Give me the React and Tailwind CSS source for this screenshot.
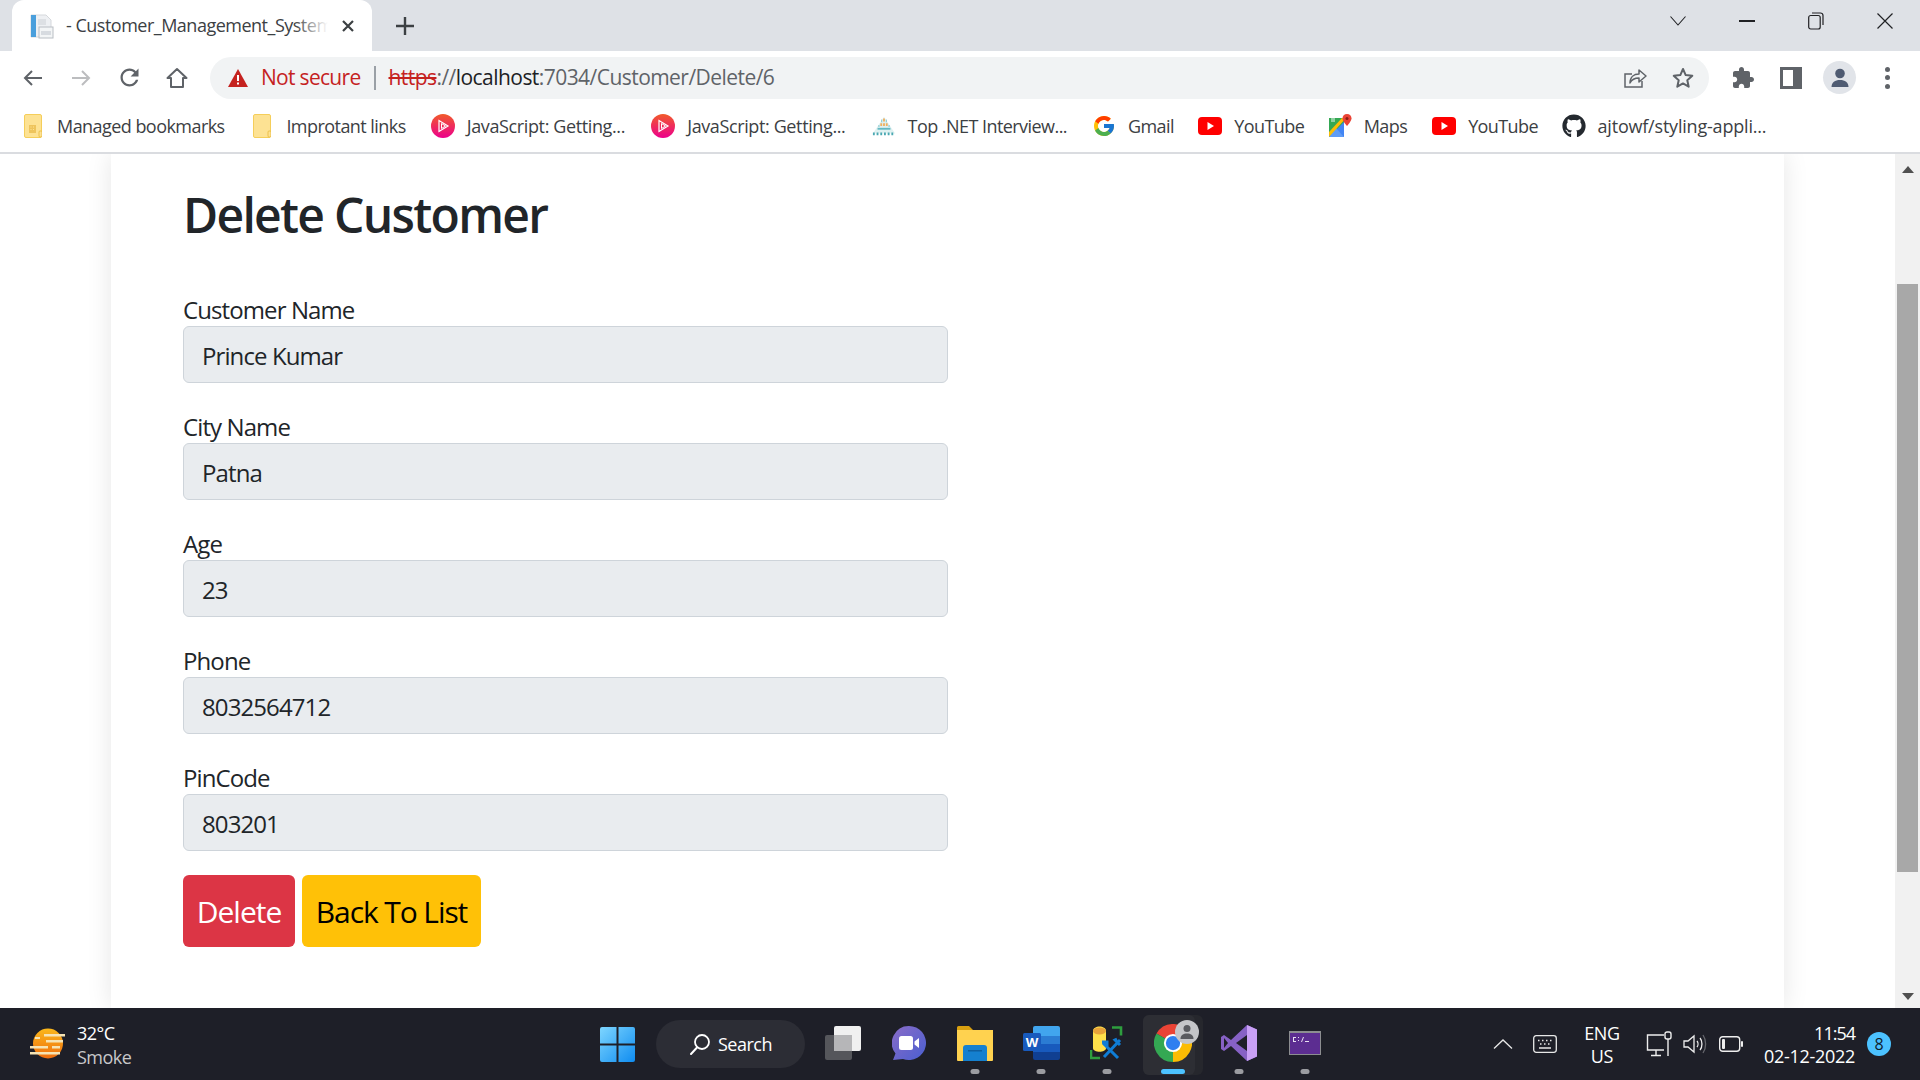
import { FaGithub } from "react-icons/fa";
import { FcGoogle } from "react-icons/fc";

const fields = [
  { label: "Customer Name", value: "Prince Kumar" },
  { label: "City Name", value: "Patna" },
  { label: "Age", value: "23" },
  { label: "Phone", value: "8032564712" },
  { label: "PinCode", value: "803201" },
];

const FolderIcon = ({ managed }) => (
  <svg width="18" height="24" viewBox="0 0 18 24">
    <rect x="0.5" y="0.5" width="17" height="23" rx="1.5" fill="#fde293" stroke="#f5ce5a" />
    <rect x="15" y="17" width="3" height="6" rx="1" fill="#fde293" stroke="#e8b93a" strokeWidth="0.8" />
    {managed ? <path d="M5 11h7v8H5z" fill="#eec45c" /> : null}
    {managed ? <path d="M6.5 12.5h1v1h-1zM9 12.5h1v1H9zM6.5 15h1v1h-1zM9 15h1v1H9z" fill="#fde293" /> : null}
  </svg>
);

const PluralsightIcon = ({ id }) => (
  <svg width="24" height="24" viewBox="0 0 24 24">
    <defs>
      <linearGradient id={id} x1="0" y1="0" x2="0" y2="1">
        <stop offset="0" stopColor="#f15b2a" />
        <stop offset="1" stopColor="#ec008c" />
      </linearGradient>
    </defs>
    <ellipse cx="12" cy="12" rx="12" ry="12" fill={`url(#${id})`} />
    <path d="M8 6.5v11l9-5.5z" fill="none" stroke="#fff" strokeWidth="1.2" />
    <path d="M10.5 9.5v5l4-2.500z" fill="none" stroke="#fff" strokeWidth="1" />
  </svg>
);

const NetIcon = () => (
  <svg width="26" height="24" viewBox="0 0 26 24">
    <path d="M13 2L1 20h24z" fill="#dff1f1" />
    <path d="M12 4h2v3h-2zM9 9h2v3H9zM12 9h2v3h-2zM15 9h2v3h-2z" fill="#f0b060" />
    <path d="M6 14h14v2H6z" fill="#62b8c2" />
    <path d="M1 19h2v3H1zM5 19h2v3H5zM9 19h2v3H9zM13 19h2v3h-2zM17 19h2v3h-2zM21 19h2v3h-2z" fill="#4aa8b2" />
    <path d="M10 5h1v3h-1zM15 5h1v3h-1zM7 11h1v2H7zM18 11h1v2h-1z" fill="#7fc4cc" />
  </svg>
);

const YoutubeIcon = () => (
  <svg width="24" height="18" viewBox="0 0 24 18">
    <rect width="24" height="18" rx="4" fill="#ff0000" />
    <path d="M9.500 5v8l6.500-4z" fill="#fff" />
  </svg>
);

const MapsIcon = () => (
  <svg width="24" height="24" viewBox="0 0 24 24">
    <path d="M1 4h15v19H1z" fill="#34a853" />
    <path d="M1 23L16 8v15z" fill="#4285f4" />
    <path d="M1 23l7-9 8 9z" fill="#5f9cf5" />
    <path d="M1 18L14 4h4L1 23z" fill="#fbbc04" />
    <path d="M3 4h4v4H3z" fill="#8fd0a0" />
    <path d="M19 0c-2.800 0-4.500 2-4.500 4.300C14.500 7.500 19 12 19 12s4.500-4.500 4.500-7.700C23.500 2 21.800 0 19 0z" fill="#ea4335" />
    <circle cx="19" cy="4.500" r="1.500" fill="#8c1c13" />
  </svg>
);

const bookmarks = [
  { icon: <FolderIcon managed />, text: "Managed bookmarks", size: "w-[168px] tracking-[-0.55px]" },
  { icon: <FolderIcon />, text: "Improtant links", size: "w-[119px] tracking-[-0.55px]" },
  { icon: <PluralsightIcon id="ps1" />, text: "JavaScript: Getting...", size: "w-[159px] tracking-[-0.38px]" },
  { icon: <PluralsightIcon id="ps2" />, text: "JavaScript: Getting...", size: "w-[159px] tracking-[-0.38px]" },
  { icon: <NetIcon />, text: "Top .NET Interview...", size: "w-[159px] tracking-[-0.55px]" },
  { icon: <FcGoogle size={24} />, text: "Gmail", size: "w-[45px] tracking-[-0.55px]" },
  { icon: <YoutubeIcon />, text: "YouTube", size: "w-[68px] tracking-[-0.6px]" },
  { icon: <MapsIcon />, text: "Maps", size: "w-[43px] tracking-[-0.55px]" },
  { icon: <YoutubeIcon />, text: "YouTube", size: "w-[68px] tracking-[-0.6px]" },
  { icon: <FaGithub size={24} color="#24292f" />, text: "ajtowf/styling-appli...", size: "w-[167px] tracking-[-0.2px]" },
];

function TabStrip() {
  return (
    <div className="flex h-[51px] items-stretch bg-[#dee1e6] pl-[12px]">
      <div className="relative flex h-[51px] w-[360px] items-center rounded-t-[12px] bg-white pl-[18px]">
        <svg width="24" height="26" viewBox="0 0 24 26">
          <path d="M1 2h15l5 5v17H1z" fill="#eef0f3" stroke="#d5d8dc" />
          <rect x="1" y="2" width="5" height="22" fill="#4a9fdc" />
          <rect x="9" y="14" width="14" height="11" fill="#f3f5f6" stroke="#b9bec4" />
          <rect x="11" y="18" width="10" height="4" fill="#d7dbe0" />
          <rect x="8" y="6" width="8" height="6" fill="#dde0e4" />
        </svg>
        <div className="relative ml-[12px] w-[262px] overflow-hidden whitespace-nowrap text-[18px] tracking-[-0.5px] text-[#3c4043]">
          - Customer_Management_System
          <div className="absolute inset-y-0 right-0 w-[34px] bg-gradient-to-r from-white/0 to-white" />
        </div>
        <svg className="ml-[13px]" width="14" height="14" viewBox="0 0 14 14">
          <path d="M2 2l10 10M12 2L2 12" stroke="#3c4043" strokeWidth="2.200" />
        </svg>
      </div>
      <div className="flex w-[66px] items-center justify-center">
        <svg width="20" height="20" viewBox="0 0 20 20">
          <path d="M10 1v18M1 10h18" stroke="#3c4043" strokeWidth="2.400" />
        </svg>
      </div>
      <div className="ml-auto flex items-center pb-[9px]">
        <div className="flex w-[68px] justify-center">
          <svg width="18" height="12" viewBox="0 0 18 12">
            <path d="M1.500 1.500L9 10l7.500-8.500" fill="none" stroke="#202124" strokeWidth="1.100" />
          </svg>
        </div>
        <div className="flex w-[70px] justify-center">
          <div className="h-[1.500px] w-[16px] bg-[#202124]" />
        </div>
        <div className="flex w-[68px] justify-center">
          <svg width="16" height="18" viewBox="0 0 16 18">
            <rect x="0.700" y="3.500" width="11.500" height="13.500" rx="2" fill="none" stroke="#202124" strokeWidth="1.200" />
            <path d="M4 1h8.500A2.500 2.500 0 0 1 15 3.500V13" fill="none" stroke="#202124" strokeWidth="1.200" />
          </svg>
        </div>
        <div className="flex w-[70px] justify-center">
          <svg width="18" height="18" viewBox="0 0 18 18">
            <path d="M1.500 1.500l15 15M16.500 1.500l-15 15" stroke="#202124" strokeWidth="1.200" />
          </svg>
        </div>
      </div>
    </div>
  );
}

function Toolbar() {
  return (
    <div className="flex h-[53px] items-center bg-white pl-[9px]">
      <div className="flex w-[48px] justify-center">
        <svg width="24" height="24" viewBox="0 0 24 24">
          <path d="M21 12H4M11 5l-7 7 7 7" fill="none" stroke="#5f6368" strokeWidth="2" />
        </svg>
      </div>
      <div className="flex w-[48px] justify-center">
        <svg width="24" height="24" viewBox="0 0 24 24">
          <path d="M3 12h17M13 5l7 7-7 7" fill="none" stroke="#bcbdbf" strokeWidth="2" />
        </svg>
      </div>
      <div className="flex w-[48px] justify-center">
        <svg width="27" height="27" viewBox="0 0 24 24">
          <path fill="#5f6368" d="M17.650 6.350C16.200 4.900 14.210 4 12 4c-4.420 0-7.990 3.580-7.990 8s3.570 8 7.990 8c3.730 0 6.840-2.550 7.730-6h-2.080c-.82 2.330-3.040 4-5.650 4-3.310 0-6-2.690-6-6s2.690-6 6-6c1.660 0 3.140.69 4.220 1.780L13 11h7V4l-2.350 2.350z" />
        </svg>
      </div>
      <div className="flex w-[48px] justify-center">
        <svg width="24" height="24" viewBox="0 0 24 24">
          <path d="M12 3L2.500 12H6v9h12v-9h3.500z" fill="none" stroke="#5f6368" strokeWidth="2" strokeLinejoin="round" />
        </svg>
      </div>
      <div className="ml-[9px] flex h-[42px] w-[1499px] items-center rounded-full bg-[#f1f3f4] pl-[17px]">
        <svg width="22" height="20" viewBox="0 0 22 20">
          <path d="M11 1L21 19H1z" fill="#c5221f" />
          <path d="M10 7h2v6h-2zM10 14.500h2v2h-2z" fill="#fff" />
        </svg>
        <span className="ml-[12px] whitespace-nowrap text-[21px] leading-none tracking-[-0.7px] text-[#c5221f]">Not secure</span>
        <div className="ml-[13px] h-[24px] w-[2px] bg-[#9aa0a6]" />
        <div className="ml-[13px] whitespace-nowrap text-[21px] leading-none tracking-[-0.55px] text-[#5f6368]">
          <span className="text-[#c5221f] line-through">https</span>://<span className="text-[#202124]">localhost</span>:7034/Customer/Delete/6
        </div>
        <div className="ml-auto flex items-center pr-[14px]">
          <svg width="24" height="24" viewBox="0 0 24 24">
            <path d="M19 15v6H2V8h7" fill="none" stroke="#5f6368" strokeWidth="1.500" />
            <path d="M7 17c0-6 4-9 9-9V4l7 6-7 6v-4c-4 0-7 1-9 5z" fill="none" stroke="#5f6368" strokeWidth="1.500" strokeLinejoin="round" />
          </svg>
          <svg className="ml-[24px]" width="24" height="24" viewBox="0 0 24 24">
            <path d="M12 3l2.700 6.100 6.600.7-5 4.400 1.400 6.500-5.700-3.300-5.700 3.300 1.400-6.500-5-4.400 6.600-.7z" fill="none" stroke="#5f6368" strokeWidth="2" strokeLinejoin="round" />
          </svg>
        </div>
      </div>
      <div className="flex w-[68px] justify-center">
        <svg width="24" height="26" viewBox="0 0 24 24">
          <path fill="#5f6368" d="M20.500 11H19V7c0-1.100-.9-2-2-2h-4V3.500C13 2.120 11.880 1 10.500 1S8 2.120 8 3.500V5H4c-1.100 0-1.990.9-1.990 2v3.800H3.500c1.490 0 2.700 1.210 2.700 2.700s-1.210 2.700-2.700 2.700H2V20c0 1.100.9 2 2 2h3.800v-1.500c0-1.490 1.210-2.700 2.700-2.700 1.490 0 2.700 1.210 2.700 2.700V22H17c1.100 0 2-.9 2-2v-4h1.500c1.380 0 2.500-1.120 2.500-2.500S21.880 11 20.500 11z" />
        </svg>
      </div>
      <div className="flex w-[28px] justify-center">
        <svg width="22" height="22" viewBox="0 0 22 22">
          <rect width="22" height="22" fill="#5f6368" />
          <rect x="3" y="3" width="10" height="16" fill="#fff" />
        </svg>
      </div>
      <div className="ml-[18px] flex h-[33px] w-[33px] items-center justify-center rounded-full bg-[#e1e4e9]">
        <svg width="22" height="22" viewBox="0 0 22 22">
          <circle cx="11" cy="6.500" r="4.800" fill="#4f5b72" />
          <path d="M2.500 20c0-4.500 3.500-7 8.500-7s8.500 2.500 8.500 7z" fill="#4f5b72" />
        </svg>
      </div>
      <div className="ml-[15px] flex w-[32px] flex-col items-center gap-[3.500px]">
        <div className="h-[5px] w-[5px] rounded-full bg-[#5f6368]" />
        <div className="h-[5px] w-[5px] rounded-full bg-[#5f6368]" />
        <div className="h-[5px] w-[5px] rounded-full bg-[#5f6368]" />
      </div>
    </div>
  );
}

function BookmarksBar() {
  return (
    <div className="flex h-[50px] items-center gap-[25.4px] border-b-2 border-[#dadce0] bg-white pb-[4px] pl-[21px]">
      {bookmarks.map((item, i) => (
        <div key={i} className="flex items-center gap-[12px]">
          <div className="flex h-[24px] w-[24px] items-center justify-center">{item.icon}</div>
          <span className={`${item.size} whitespace-nowrap text-[18px] leading-none text-[#3c4043]`}>{item.text}</span>
        </div>
      ))}
    </div>
  );
}

function DeleteCard() {
  return (
    <div className="ml-[111px] h-full w-[1673px] bg-white pl-[72px] pt-[32px] text-[#212529] shadow-[0_0_24px_rgba(0,0,0,0.1)]">
      <h2 className="text-[48px] font-semibold leading-[1.2] tracking-[-1.7px]">Delete Customer</h2>
      <div className="mt-[46px] w-[765px]">
        {fields.map((field) => (
          <div key={field.label} className="mb-[24px]">
            <div className="h-[36px] text-[24px] leading-[40px] tracking-[-0.9px]">{field.label}</div>
            <div className="flex h-[57px] items-center rounded-[6px] border border-[#ced4da] bg-[#e9ecef] pl-[18px] pt-[3px] text-[24px] tracking-[-0.9px]">
              {field.value}
            </div>
          </div>
        ))}
      </div>
      <div className="flex gap-[7px]">
        <button type="button" className="h-[72px] w-[112px] rounded-[6px] bg-[#dc3545] pt-[1px] text-[30px] tracking-[-1px] text-white">
          Delete
        </button>
        <button type="button" className="h-[72px] w-[179px] rounded-[6px] bg-[#ffc107] pt-[1px] text-[30px] tracking-[-1.1px] text-black">
          Back To List
        </button>
      </div>
    </div>
  );
}

function Scrollbar() {
  return (
    <div className="flex h-full w-[25px] flex-col items-center bg-[#f1f1f1]">
      <div className="mt-[12px] h-0 w-0 shrink-0 border-x-[6px] border-b-[7px] border-x-transparent border-b-[#505050]" />
      <div className="mt-[111px] h-[588px] w-[21px] shrink-0 bg-[#a8a8a8]" />
      <div className="mt-[121px] h-0 w-0 shrink-0 border-x-[6px] border-t-[7px] border-x-transparent border-t-[#505050]" />
    </div>
  );
}

function TaskItem({ dot, children }) {
  return (
    <div className="relative flex h-full w-[66px] items-center justify-center pb-[2px]">
      {children}
      {dot ? <div className="absolute bottom-[6px] left-1/2 h-[5px] w-[9px] -translate-x-1/2 rounded-full bg-[#9b9ca1]" /> : null}
    </div>
  );
}

function Taskbar() {
  return (
    <div className="flex h-[72px] items-center bg-[#1e1f28] text-white">
      <div className="flex w-[584px] items-center pl-[30px]">
        <svg width="37" height="32" viewBox="0 0 37 32">
          <defs>
            <linearGradient id="sun" x1="0" y1="0" x2="0" y2="1">
              <stop offset="0" stopColor="#fbb81b" />
              <stop offset="1" stopColor="#ef6c0e" />
            </linearGradient>
          </defs>
          <ellipse cx="18" cy="15.500" rx="15" ry="15" fill="url(#sun)" />
          <path d="M14 6h21v2.500H14zM16 12h17v2.500H16zM0 18h18v2.500H0zM22 18h8v2.500h-8zM0 24h30v2.500H0zM5 9h5v2H5z" fill="#f6e3b4" />
        </svg>
        <div className="ml-[10px] pt-[2px] text-[18px] leading-[24px] tracking-[-0.5px]">
          <div>32°C</div>
          <div className="text-[#c8c8ca]">Smoke</div>
        </div>
      </div>
      <div className="flex h-full w-[66px] items-center justify-center">
        <svg width="35" height="35" viewBox="0 0 35 35">
          <defs>
            <linearGradient id="win" x1="0" y1="0" x2="1" y2="1">
              <stop offset="0" stopColor="#7ed6ff" />
              <stop offset="1" stopColor="#0f8cf0" />
            </linearGradient>
          </defs>
          <path d="M0 2a2 2 0 0 1 2-2h14.500v16.500H0zM18.500 0H33a2 2 0 0 1 2 2v14.500H18.500zM0 18.500h16.500V35H2a2 2 0 0 1-2-2zM18.500 18.500H35V33a2 2 0 0 1-2 2H18.500z" fill="url(#win)" />
        </svg>
      </div>
      <div className="ml-[6px] flex h-[48px] w-[149px] items-center rounded-full bg-[#2c2d35] pl-[32px]">
        <svg width="24" height="24" viewBox="0 0 24 24">
          <circle cx="14" cy="10" r="7" fill="none" stroke="#fff" strokeWidth="1.800" />
          <path d="M9 15.500L3 22" stroke="#fff" strokeWidth="2" strokeLinecap="round" />
        </svg>
        <span className="ml-[6px] text-[18px] tracking-[-0.5px]">Search</span>
      </div>
      <div className="ml-[5px] flex h-full items-center">
        <TaskItem>
          <svg width="36" height="34" viewBox="0 0 36 34">
            <rect y="9" width="27" height="25" rx="2" fill="#55565b" />
            <rect x="9" width="27" height="25" rx="2" fill="#f0f0f0" />
            <rect x="9" y="9" width="18" height="16" fill="#b6b6b8" />
          </svg>
        </TaskItem>
        <TaskItem>
          <svg width="34" height="34" viewBox="0 0 34 34">
            <defs>
              <linearGradient id="teams" x1="0" y1="0" x2="1" y2="1">
                <stop offset="0" stopColor="#8a6cc8" />
                <stop offset="1" stopColor="#4a5fd0" />
              </linearGradient>
            </defs>
            <path d="M17 0a17 17 0 1 1-6 32.900L1 34l2.500-6.500A17 17 0 0 1 17 0z" fill="url(#teams)" />
            <rect x="7" y="10" width="14" height="14" rx="2.500" fill="#fff" />
            <path d="M22.500 15.500L27 12v10l-4.500-3.500z" fill="#fff" />
          </svg>
        </TaskItem>
        <TaskItem dot>
          <svg width="36" height="35" viewBox="0 0 36 35">
            <path d="M0 1.500A1.500 1.500 0 0 1 1.500 0H12l4 4h20v8H0z" fill="#d9a010" />
            <path d="M0 4h36v30a1 1 0 0 1-1 1H1a1 1 0 0 1-1-1z" fill="#ffd24f" />
            <path d="M6 22a3 3 0 0 1 3-3h18a3 3 0 0 1 3 3v13H6z" fill="#1580cf" />
            <rect x="11" y="24" width="14" height="1.500" fill="#0f5f9f" />
          </svg>
        </TaskItem>
        <TaskItem dot>
          <svg width="37" height="34" viewBox="0 0 37 34">
            <path d="M10 2a2 2 0 0 1 2-2h23a2 2 0 0 1 2 2v8H10z" fill="#41a5ee" />
            <path d="M10 10h27v8H10z" fill="#2b7cd3" />
            <path d="M10 18h27v8H10z" fill="#185abd" />
            <path d="M10 26h27v6a2 2 0 0 1-2 2H12a2 2 0 0 1-2-2z" fill="#103f91" />
            <rect y="7" width="18" height="18" rx="1.500" fill="#185abd" />
            <text x="9" y="21" textAnchor="middle" fontSize="13" fontWeight="700" fontFamily="'Open Sans', sans-serif" fill="#fff">W</text>
          </svg>
        </TaskItem>
        <TaskItem dot>
          <svg width="34" height="34" viewBox="0 0 34 34">
            <path d="M3 5c0-6 13-6 13 0v17c0 5-13 5-13 0z" fill="#ffe04a" />
            <ellipse cx="9.500" cy="5" rx="6.500" ry="3.500" fill="#e8a33a" />
            <path d="M22 1.500h9v8M1 24v8h9" fill="none" stroke="#2e9e3e" strokeWidth="2.600" />
            <path d="M13 17l15 15M30 14l-16 17M12 16l5 0 0 5M30 19l-5-5 2-1" fill="none" stroke="#0f7dd6" strokeWidth="3" />
          </svg>
        </TaskItem>
        <TaskItem>
          <div className="absolute left-[3px] top-[7px] h-[60px] w-[60px] rounded-[6px] bg-[#26272d]" />
          <div className="absolute left-[3px] top-[7px] h-[60px] w-[52px] rounded-[6px] bg-[#2d2e34]" />
          <svg className="relative" width="38" height="38" viewBox="0 0 48 48">
            <path d="M24 24L3.200 12A24 24 0 0 1 44.800 12z" fill="#ea4335" />
            <path d="M24 24L44.800 12A24 24 0 0 1 24 48z" fill="#fbbc04" />
            <path d="M24 24L24 48A24 24 0 0 1 3.200 12z" fill="#34a853" />
            <circle cx="24" cy="24" r="11.500" fill="#fff" />
            <circle cx="24" cy="24" r="9" fill="#2f7ff0" />
          </svg>
          <div className="absolute right-[7px] top-[12px] flex h-[24px] w-[24px] items-center justify-center rounded-full bg-[#c5c6c9]">
            <svg width="16" height="16" viewBox="0 0 16 16">
              <circle cx="8" cy="4.500" r="3.500" fill="#5a5b60" />
              <path d="M1.500 15c0-4 3-5.500 6.500-5.500s6.500 1.500 6.500 5.500z" fill="#5a5b60" />
            </svg>
          </div>
          <div className="absolute bottom-[6px] left-[21px] h-[5px] w-[24px] rounded-full bg-[#4cc2ff]" />
        </TaskItem>
        <TaskItem dot>
          <svg width="36" height="36" viewBox="0 0 36 36">
            <path d="M26 0l10 4.500v27L26 36 10 21 3 26l-3-2V12l3-2 7 5z" fill="#8661c5" />
            <path d="M26 0l10 4.500v27L26 36z" fill="#c9a0f5" />
            <path d="M26 10L15 18l11 8z" fill="#1e1f28" />
            <path d="M3 13v10l4-5z" fill="#1e1f28" />
          </svg>
        </TaskItem>
        <TaskItem dot>
          <svg width="32" height="24" viewBox="0 0 32 24">
            <rect width="32" height="24" fill="#8c8d90" />
            <rect x="1" y="2" width="30" height="21" fill="#5c2d91" />
            <path d="M4 6h3v1H5v3h2v1H4zM9 6h1v1H9zM9 9h1v1H9zM12 11l2-5h1l-2 5zM16 10h4v1h-4z" fill="#e8e0f0" />
          </svg>
        </TaskItem>
      </div>
      <div className="ml-auto flex h-full items-center pr-[29px]">
        <div className="flex w-[40px] justify-center">
          <svg width="20" height="12" viewBox="0 0 20 12">
            <path d="M1 10.500L10 2l9 8.500" fill="none" stroke="#e8e8e8" strokeWidth="1.300" />
          </svg>
        </div>
        <div className="flex w-[44px] justify-center">
          <svg width="24" height="18" viewBox="0 0 24 18">
            <rect x="0.700" y="0.700" width="22.600" height="16.600" rx="2.500" fill="none" stroke="#e8e8e8" strokeWidth="1.300" />
            <path d="M5 5.500h1.500M9 5.500h1.500M13 5.500h1.500M17 5.500h1.500M7 9h1.500M11 9h1.500M15 9h1.500M6 13h12" stroke="#e8e8e8" strokeWidth="1.400" />
          </svg>
        </div>
        <div className="w-[70px] pt-[2px] text-center text-[18px] leading-[23px] tracking-[-0.3px]">
          <div>ENG</div>
          <div>US</div>
        </div>
        <div className="flex w-[44px] justify-center">
          <svg width="26" height="26" viewBox="0 0 26 26">
            <path d="M18 4H1.500v15H18M10 19v5M5 24.500h10" fill="none" stroke="#eee" strokeWidth="1.400" />
            <rect x="19" y="1" width="6" height="7" rx="2" fill="none" stroke="#eee" strokeWidth="1.400" />
            <path d="M22 8v17" stroke="#eee" strokeWidth="1.400" />
          </svg>
        </div>
        <div className="flex w-[28px] justify-center">
          <svg width="24" height="22" viewBox="0 0 24 22">
            <path d="M1 8h4l6-5v16l-6-5H1z" fill="none" stroke="#eee" strokeWidth="1.300" />
            <path d="M14 8c1.300 1.600 1.300 4.400 0 6M17 5c2.600 3 2.600 9 0 12" fill="none" stroke="#eee" strokeWidth="1.300" />
            <path d="M20 2c3.500 5 3.500 13 0 18" fill="none" stroke="#66676d" strokeWidth="1.300" />
          </svg>
        </div>
        <div className="flex w-[44px] justify-center">
          <svg width="24" height="16" viewBox="0 0 24 16">
            <rect x="0.700" y="0.700" width="20" height="14.600" rx="3" fill="none" stroke="#eee" strokeWidth="1.400" />
            <rect x="3" y="3" width="3" height="10" rx="1" fill="#eee" />
            <rect x="22" y="5" width="2" height="6" rx="1" fill="#eee" />
          </svg>
        </div>
        <div className="w-[102px] whitespace-nowrap pt-[2px] text-right text-[18px] leading-[23px] tracking-[-0.3px]">
          <div className="tracking-[-1px]">11:54</div>
          <div>02-12-2022</div>
        </div>
        <div className="ml-[12px] flex h-[24px] w-[24px] items-center justify-center rounded-full bg-[#4cc2ff] text-[16px] text-[#10202c]">
          8
        </div>
      </div>
    </div>
  );
}

export default function App() {
  return (
    <div className="flex h-screen w-full flex-col overflow-hidden bg-white font-['Open_Sans',sans-serif]">
      <TabStrip />
      <Toolbar />
      <BookmarksBar />
      <div className="flex min-h-0 flex-1">
        <div className="min-w-0 flex-1 overflow-hidden">
          <DeleteCard />
        </div>
        <Scrollbar />
      </div>
      <Taskbar />
    </div>
  );
}
